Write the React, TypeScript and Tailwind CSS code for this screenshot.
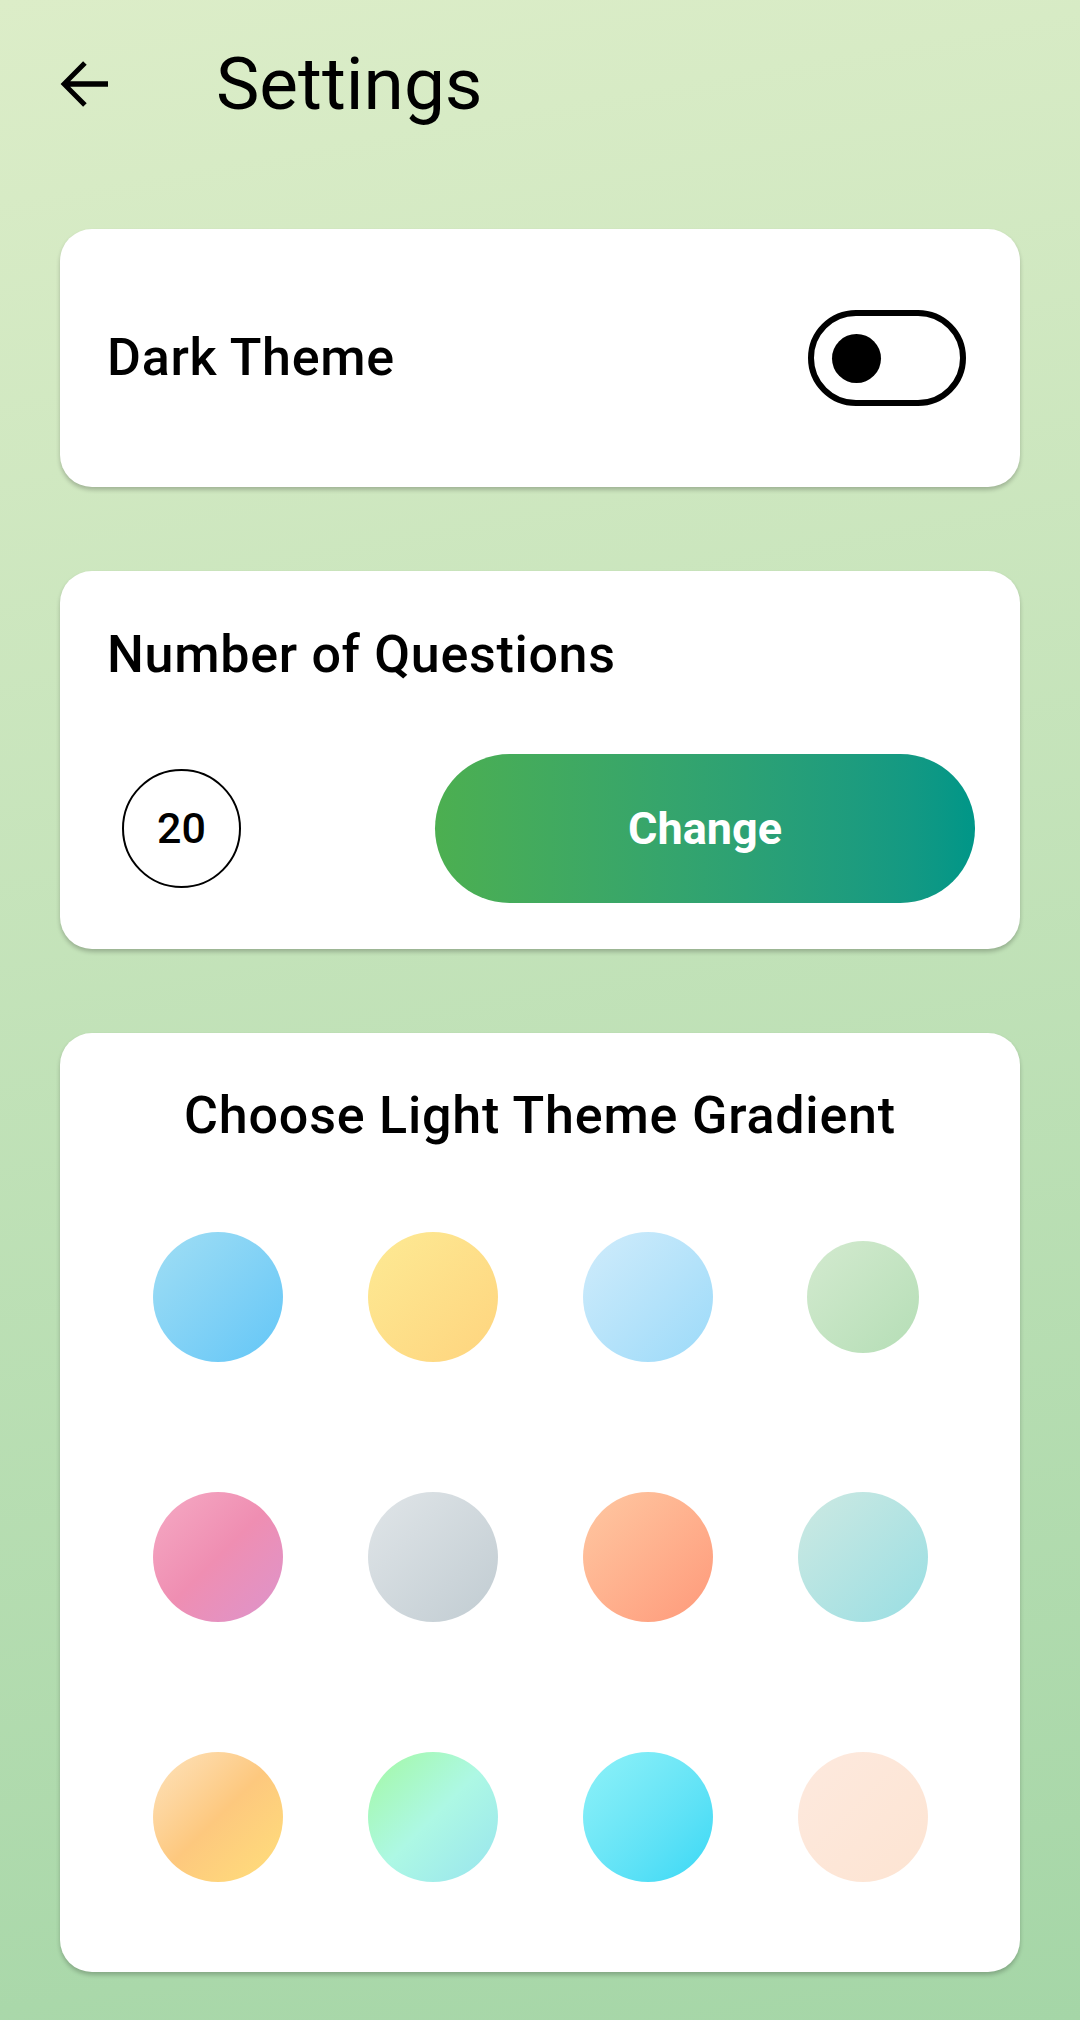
import { useState } from 'react';

const swatches = [
  { cls: 'bg-gradient-to-br from-[#a0def4] to-[#62c6f7]', size: 'size-[130px]' },
  { cls: 'bg-gradient-to-br from-[#fdea94] to-[#fed47e]', size: 'size-[130px]' },
  { cls: 'bg-gradient-to-br from-[#d0ecfb] to-[#9bdaf9]', size: 'size-[130px]' },
  { cls: 'bg-gradient-to-br from-[#d3eacf] to-[#b5deb6]', size: 'size-[112px]' },
  { cls: 'bg-gradient-to-br from-[#f5aac4] via-[#ef8eb2] to-[#dc94cc]', size: 'size-[130px]' },
  { cls: 'bg-gradient-to-br from-[#e0e5e8] to-[#c1ccd2]', size: 'size-[130px]' },
  { cls: 'bg-gradient-to-br from-[#fec8a2] to-[#fe997a]', size: 'size-[130px]' },
  { cls: 'bg-gradient-to-br from-[#cde9e2] to-[#98dee3]', size: 'size-[130px]' },
  { cls: 'bg-gradient-to-br from-[#fde3bd] via-[#fdc87e] to-[#ffdf7a]', size: 'size-[130px]' },
  { cls: 'bg-gradient-to-br from-[#a4f8a0] via-[#adf8e4] to-[#98e4ee]', size: 'size-[130px]' },
  { cls: 'bg-gradient-to-br from-[#8ef2f8] to-[#36d8f5]', size: 'size-[130px]' },
  { cls: 'bg-gradient-to-br from-[#fde9de] to-[#fde4d2]', size: 'size-[130px]' },
];

function Card({ children, className }: { children: React.ReactNode; className?: string }) {
  return (
    <div className={`bg-white rounded-[32px] shadow-[0_3px_4px_rgba(0,0,0,0.22)] ${className ?? ''}`}>
      {children}
    </div>
  );
}

export default function App() {
  const [dark, setDark] = useState(false);

  return (
    <div className="min-h-[2020px] w-[1080px] bg-[linear-gradient(170deg,#dcedc8,#a5d6a7)] font-['Roboto',sans-serif] text-black">
      {/* top bar */}
      <div className="flex items-center h-[170px] pb-[2px]">
        <button className="ml-[36px] size-[96px] flex items-center justify-center">
          <svg width="72" height="72" viewBox="0 0 24 24" fill="black">
            <path d="M20 11.1H7.4l5.5-5.5-1.2-1.2L4.2 12l7.5 7.6 1.2-1.2-5.5-5.5H20z" />
          </svg>
        </button>
        <h1 className="ml-[84px] text-[73px] leading-none font-normal">Settings</h1>
      </div>

      <div className="px-[60px] pt-[59px] flex flex-col gap-[84px]">
        <Card className="h-[258px] flex items-center justify-between pl-[47px] pr-[54px]">
          <span className="text-[52px] leading-none font-medium tracking-[0.7px]">Dark Theme</span>
          <button
            onClick={() => setDark(!dark)}
            className="w-[158px] h-[96px] rounded-full border-[6px] border-black flex items-center px-[18px]"
          >
            <span className={`size-[49px] rounded-full bg-black ${dark ? 'ml-auto' : ''}`} />
          </button>
        </Card>

        <Card className="h-[378px] pt-[58px] pl-[47px] pr-[45px]">
          <div className="text-[52px] leading-none font-medium tracking-[0.7px]">Number of Questions</div>
          <div className="mt-[73px] flex items-center justify-between">
            <div className="ml-[15px] size-[119px] rounded-full border-[2.5px] border-black flex items-center justify-center text-[43px] font-medium">
              20
            </div>
            <button className="w-[540px] h-[149px] rounded-full bg-gradient-to-r from-[#4caf50] to-[#009688] text-white text-[45px] font-bold">
              Change
            </button>
          </div>
        </Card>

        <Card className="h-[939px] pt-[57px] px-[50px]">
          <div className="text-[52px] leading-none font-medium tracking-[0.8px] text-center">Choose Light Theme Gradient</div>
          <div className="mt-[25px] grid grid-cols-4 auto-rows-[260px]">
            {swatches.map((s, i) => (
              <div key={i} className="flex items-center justify-center">
                <div className={`${s.size} rounded-full ${s.cls}`} />
              </div>
            ))}
          </div>
        </Card>
      </div>
    </div>
  );
}
